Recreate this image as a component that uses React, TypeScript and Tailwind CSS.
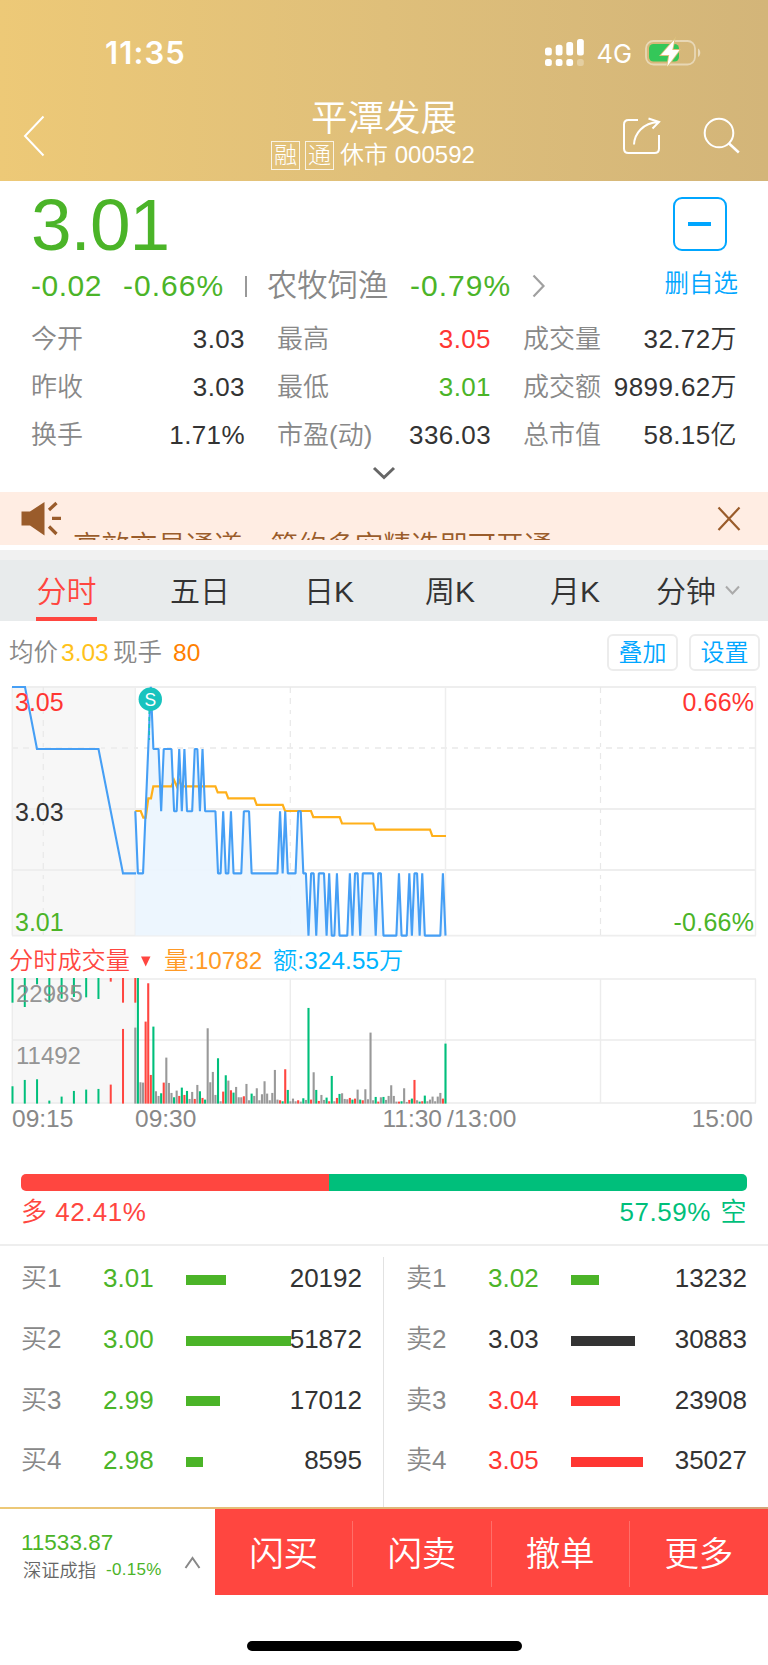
import { ReactNode } from 'react';

type Point = [number, number];

type Quote = {
  label: string;
  value: string;
  color?: string;
}

type OrderLevel = {
  label: string;
  price: string;
  volume: string;
  width: number;
  text: string;
  bar: string;
}

const quotes: Quote[] = [
  { label: "今开", value: "3.03" },
  { label: "最高", value: "3.05", color: "text-[#ff3632]" },
  { label: "成交量", value: "32.72万" },
  { label: "昨收", value: "3.03" },
  { label: "最低", value: "3.01", color: "text-[#4bb428]" },
  { label: "成交额", value: "9899.62万" },
  { label: "换手", value: "1.71%" },
  { label: "市盈(动)", value: "336.03" },
  { label: "总市值", value: "58.15亿" },
];

const buyLevels: OrderLevel[] = [
  { label: "买1", price: "3.01", volume: "20192", width: 40, text: "text-[#4bb428]", bar: "bg-[#4bb428]" },
  { label: "买2", price: "3.00", volume: "51872", width: 105, text: "text-[#4bb428]", bar: "bg-[#4bb428]" },
  { label: "买3", price: "2.99", volume: "17012", width: 34, text: "text-[#4bb428]", bar: "bg-[#4bb428]" },
  { label: "买4", price: "2.98", volume: "8595", width: 17, text: "text-[#4bb428]", bar: "bg-[#4bb428]" },
];

const sellLevels: OrderLevel[] = [
  { label: "卖1", price: "3.02", volume: "13232", width: 28, text: "text-[#4bb428]", bar: "bg-[#4bb428]" },
  { label: "卖2", price: "3.03", volume: "30883", width: 64, text: "text-[#333333]", bar: "bg-[#333333]" },
  { label: "卖3", price: "3.04", volume: "23908", width: 49, text: "text-[#ff3632]", bar: "bg-[#ff3632]" },
  { label: "卖4", price: "3.05", volume: "35027", width: 72, text: "text-[#ff3632]", bar: "bg-[#ff3632]" },
];

// minute after 09:30, level above the bottom of the grid
const priceSteps: Point[] = [
  [0, 2], [1, 1], [3, 1], [4, 2], [5, 3], [6, 4], [7, 3], [9, 3], [10, 2], [11, 3], [14, 3], [15, 2], [16, 2],
  [17, 3], [18, 2], [19, 3], [20, 2], [22, 2], [23, 3], [24, 3], [25, 2], [26, 3], [27, 2], [31, 2], [32, 1],
  [33, 1], [34, 2], [35, 1], [36, 1], [37, 2], [38, 1], [41, 1], [42, 2], [44, 2], [45, 1], [55, 1], [56, 2],
  [57, 1], [58, 2], [59, 1], [62, 1], [63, 2], [64, 2], [65, 1], [66, 1], [67, 0], [68, 1], [69, 1], [70, 0],
  [71, 1], [73, 1], [74, 0], [75, 1], [76, 0], [77, 0], [78, 1], [79, 0], [82, 0], [83, 1], [84, 0], [85, 1],
  [86, 1], [87, 0], [88, 1], [92, 1], [93, 0], [94, 1], [95, 1], [96, 0], [101, 0], [102, 1], [103, 0],
  [105, 0], [106, 1], [107, 0], [108, 1], [109, 1], [110, 0], [111, 1], [112, 0], [118, 0], [119, 1], [120, 0],
];

const averageLine: Point[] = [
  [135.3, 811], [140.7, 811], [143.3, 817.7], [145.7, 817.7], [148.3, 798.3], [151, 798.3], [153.3, 786.3],
  [171.5, 786.3], [174, 780], [176.7, 786.3], [179.3, 780.5], [181.8, 786.3], [215.4, 786.3], [217.7, 792.3], [226, 792.3], [228.3, 798.3],
  [254.3, 798.3], [256.7, 804.8], [282.7, 804.8], [285, 811], [311, 811], [313.3, 817.2], [339.7, 817.2],
  [342, 823.5], [373.3, 823.5], [375.7, 829.7], [430, 829.7], [432.3, 836], [446, 836],
];

// r = up, g = down, n = unchanged; number is the bar's size
const volumeBars =
  "n228 g378 n64 n63 r246 r361 r86 g231 n37 n23 g31 r63 n138 n62 n32 g19 n39 r23 g48 r26 g38 n14 n35 r14 n56 g37 r17 g12 " +
  "n226 n64 n95 n26 g136 n7 r36 g85 n69 r40 g33 n50 n19 n19 r22 n59 n10 g30 n23 n46 n10 n28 n67 n30 n10 n32 n101 n12 r10 " +
  "g7 r103 g41 n7 n15 n7 r10 n6 g16 n11 g287 r12 n94 g41 r8 n26 n11 g18 r7 g83 n7 r17 g29 n31 n14 n13 r17 g12 r15 n42 g12 " +
  "r10 n43 n13 n213 n10 g20 r6 n19 g20 n11 n23 n55 n23 n6 r6 g7 n46 n5 r11 g15 r71 n10 g6 r7 g24 n7 n12 n21 n7 n21 n32 r15 g180";

const auctionBars = [
  { drop: 74, rise: 52, up: false },
  { drop: 87, rise: 71, up: false },
  { drop: 19, rise: 73, up: false },
  { drop: 74, rise: 9, up: false },
  { drop: 62, rise: 21, up: false },
  { drop: 57, rise: 38, up: false },
  { drop: 58, rise: 42, up: false },
  { drop: 63, rise: 44, up: false },
  { drop: 11, rise: 57, up: true },
  { drop: 74, rise: 224, up: true },
  { drop: 74, rise: 0, up: true },
];

const barColors: Record<string, string> = { r: "#ff4640", g: "#00bf7b", n: "#999999" };

const START_X = 135.3;
const MINUTE = 2.585;

const toPoints = (points: Point[]) => points.map(([x, y]) => `${x},${y}`).join(" ");

const Header = () => (
  <header className="h-[181px] bg-linear-to-r from-[#edc977] via-[#dfbf7a] to-[#d3b579] text-white">
    <div className="flex h-[98px] items-center pt-[7px]">
      <span className="ml-[105px] w-[439px] font-['Inter'] text-[31px] leading-none font-semibold tracking-[1.1px]">11:35</span>
      <svg width="160" height="34" viewBox="544 35 160 34">
        <g fill="#fff">
          <rect x="545" y="46.5" width="6.8" height="8" rx="2.5" />
          <rect x="555.7" y="43.7" width="6.8" height="10.8" rx="2.5" />
          <rect x="566.3" y="41" width="6.8" height="13.5" rx="2.5" />
          <rect x="577" y="38" width="6.8" height="16.5" rx="2.5" />
          <rect x="545" y="58" width="6.8" height="7" rx="2.5" />
          <rect x="555.7" y="58" width="6.8" height="7" rx="2.5" />
          <rect x="566.3" y="58" width="6.8" height="7" rx="2.5" />
          <rect x="577" y="58" width="6.8" height="7" rx="2.5" opacity=".3" />
        </g>
        <text x="596.5" y="62" fill="#fff" fontSize="25.5" fontFamily="Inter" fontWeight="400" textLength="35.5">4G</text>
        <rect x="646" y="40" width="49" height="23.5" rx="7.5" fill="none" stroke="#fff" strokeOpacity=".45" strokeWidth="1.8" />
        <path d="M698 47.5c3 1.5 3 7 0 8.500z" fill="#fff" fillOpacity=".5" />
        <rect x="649" y="43" width="30" height="17.500" rx="4.5" fill="#34c759" />
        <path d="M674.500 38.500 661 54h8.200l-2 11.500L679.500 49h-7.200z" fill="#fff" stroke="#dcc07c" strokeWidth="1.800" paintOrder="stroke" />
      </svg>
    </div>
    <div className="flex h-[83px] justify-between">
      <svg width="168" height="83" viewBox="0 98 168 83" fill="none" stroke="#fff" strokeWidth="2">
        <path d="M43.500 116.500 25 136l18.500 19.500" />
      </svg>
      <div className="flex flex-col items-center pt-[2px]">
        <h1 className="h-[38px] text-[36.500px] leading-[38px] font-[350]">平潭发展</h1>
        <div className="mr-[22px] flex h-[34px] items-center text-[24px] leading-[34px]">
          <span className="mr-[5px] flex h-[29px] w-[29px] items-center justify-center border border-white/80 text-[23px] font-light">融</span>
          <span className="mr-[6px] flex h-[29px] w-[29px] items-center justify-center border border-white/80 text-[23px] font-light">通</span>
          <span>休市 000592</span>
        </div>
      </div>
      <svg width="168" height="83" viewBox="600 98 168 83" fill="none" stroke="#fff" strokeWidth="2">
        <path d="M638 120h-9.500q-4.500 0-4.500 4.500V148.500q0 4.500 4.500 4.500H654.500q4.500 0 4.500-4.500V135" />
        <path d="M634 144.500c.5-11 9-21.500 24-22.500M648.500 118.500 659 122l-6.500 6.500" />
        <circle cx="719" cy="133" r="14.300" />
        <path d="m728.500 143 10.300 9.500" strokeWidth="2.500" />
      </svg>
    </div>
  </header>
);

const Summary = () => (
  <section className="h-[311px] pt-[7px]">
    <div className="flex justify-between pr-[30px] pl-[31px]">
      <div className="text-[#4bb428]">
        <div className="h-[74px] text-[73px] leading-[74px] tracking-[-1px]">3.01</div>
        <div className="flex h-[48px] items-center text-[30px] leading-[48px]">
          <span className="w-[92px] tracking-[0.5px]">-0.02</span>
          <span className="w-[122px] tracking-[1px]">-0.66%</span>
          <span className="mr-[20px] h-[21px] w-[2px] bg-[#999999]" />
          <span className="w-[143px] text-[30.300px] text-[#888888]">农牧饲渔</span>
          <span className="w-[122px] tracking-[1px]">-0.79%</span>
          <svg width="14" height="24" viewBox="0 0 14 24" fill="none" stroke="#a0a0a0" strokeWidth="2.200">
            <path d="m1.500 1.500 10 10.500-10 10.500" />
          </svg>
        </div>
      </div>
      <div className="flex flex-col items-center pt-[9px] text-[#00a6ff]">
        <button className="mr-[3px] flex h-[54px] w-[54px] items-center justify-center rounded-[9px] border-2 border-[#00a6ff]">
          <span className="h-[4px] w-[23px] bg-[#00a6ff]" />
        </button>
        <span className="mt-[17px] text-[24.500px] leading-[32px]">删自选</span>
      </div>
    </div>
    <div className="mt-[5px] grid grid-cols-[214px_214px_214px] gap-x-[32px] pl-[31px] text-[26px] leading-[48px]">
      {quotes.map((quote) => (
        <div key={quote.label} className="flex justify-between whitespace-nowrap">
          <span className="text-[#888888]">{quote.label}</span>
          <span className={`tracking-[0.4px] ${quote.color ?? "text-[#333333]"}`}>{quote.value}</span>
        </div>
      ))}
    </div>
    <div className="flex justify-center pt-[7px]">
      <svg width="24" height="14" viewBox="0 0 24 14" fill="none" stroke="#666" strokeWidth="3">
        <path d="m2 2 10 9.500L22 2" />
      </svg>
    </div>
  </section>
);

const Notice = () => (
  <div className="flex h-[53px] justify-between bg-[#ffede3]">
    <svg className="shrink-0" width="73" height="53" viewBox="0 492 73 53">
      <path d="M21.500 511.500h8.500L44.500 502v33.500L30 525.500h-8.500z" fill="#9a5c2b" />
      <path d="m49 510 7.500-7M52 518.300h9M49 526.500l7.500 7.500" stroke="#9a5c2b" strokeWidth="3.200" fill="none" />
    </svg>
    <div className="mr-auto h-[48px] overflow-hidden pt-[38px] text-[28.200px] leading-[32px] whitespace-nowrap text-[#9a5c2b]">
      高效交易通道，简约多空精选即可开通
    </div>
    <svg className="shrink-0" width="60" height="53" viewBox="708 492 60 53" fill="none" stroke="#9a5c2b" strokeWidth="2.200">
      <path d="m718.500 507.500 21 22.500M739.500 507.500l-21 22.500" />
    </svg>
  </div>
);

const Tabs = () => (
  <nav className="flex h-[61px] bg-[#e8ebec] text-[30px] leading-[63px] text-[#333333]">
    <div className="ml-[36px] flex h-full w-[61px] justify-center border-b-4 border-[#ff4640] text-[#ff4640]">分时</div>
    <span className="ml-[73px] w-[134px]">五日</span>
    <span className="w-[121px]">日K</span>
    <span className="w-[125px]">周K</span>
    <span className="w-[106px]">月K</span>
    <span>分钟</span>
    <svg className="mt-[25px] ml-[9px]" width="15" height="11" viewBox="0 0 15 11" fill="none" stroke="#aaa" strokeWidth="2">
      <path d="m1 1.500 6.500 7 6.500-7" />
    </svg>
  </nav>
);

const ChartButton = ({ children }: { children: ReactNode }) => (
  <button className="h-[37px] w-[71px] rounded-[6px] border-2 border-[#ececec] text-[24px] leading-[34px] text-[#00a6ff]">
    {children}
  </button>
);

const PriceChart = () => {
  const line = priceSteps.map(([minute, level]): Point => [START_X + minute * MINUTE, 935.6 - level * 62.2]);

  return (
    <svg className="block" width="768" height="260" viewBox="0 683 768 260">
      <rect x="12" y="687" width="123.500" height="248.600" fill="#f7f7f7" />
      <g stroke="#eeeeee" strokeWidth="1.500" fill="none">
        <path d="M12.300 687V935.600M135.300 687V935.600M445.500 687V935.600M755.500 687V935.600" />
        <path d="M12 687H756M12 809H756M12 870H756M12 935.600H756" strokeWidth="1.800" />
        <path d="M12 748H756" strokeWidth="1.800" strokeDasharray="6 5 6 6 4 6" />
        <path d="M43.300 687V935.600M290.300 687V935.600M600.500 687V935.600" stroke="#e8e8e8" strokeWidth="1.200" strokeDasharray="6 5 6 6 4 6" />
      </g>
      <polygon points={`${START_X},935.600 ${toPoints(line)}`} fill="#ecf5fe" fillOpacity=".92" />
      <polyline points={toPoints(averageLine)} fill="none" stroke="#ffb01a" strokeWidth="2.200" />
      <g fill="none" stroke="#469ff5" strokeWidth="2.100">
        <polyline points="12,687 25,687 37,749 98.500,749 123,873.400 136,873.400" />
        <polyline points={toPoints(line)} strokeLinejoin="bevel" />
      </g>
      <path d="M149.300 710V740" stroke="#18c3be" strokeWidth="1.500" strokeDasharray="4 3" />
      <circle cx="150.300" cy="699.300" r="11.700" fill="#18c3be" />
      <text x="150.300" y="705.500" textAnchor="middle" fontSize="17.500" fill="#fff">S</text>
      <g fontSize="25">
        <text x="15" y="711" fill="#ff3632">3.05</text>
        <text x="15" y="820.700" fill="#333">3.03</text>
        <text x="15" y="930.700" fill="#4bb428">3.01</text>
        <text x="682.500" y="711" fill="#ff3632" textLength="71.500">0.66%</text>
        <text x="673.500" y="930.700" fill="#4bb428" textLength="80.500">-0.66%</text>
      </g>
    </svg>
  );
};

const VolumeChart = () => (
  <svg className="block" width="768" height="162" viewBox="0 978 768 162">
    <rect x="12" y="978" width="123.500" height="125" fill="#f7f7f7" />
    <path
      d="M12.300 979V1103M135.300 979V1103M290.300 979V1103M445.500 979V1103M600.500 979V1103M755.500 979V1103M12 979H756M12 1040H756M12 1103H756"
      stroke="#ececec" strokeWidth="1.400" fill="none"
    />
    {auctionBars.map((bar, i) => (
      <g key={i} fill={bar.up ? barColors.r : barColors.g}>
        <rect x={11.5 + i * 12.28} y="978" width="2" height={bar.drop / 3} />
        <rect x={11.5 + i * 12.28} y={1103.6 - bar.rise / 3} width="2" height={bar.rise / 3} />
      </g>
    ))}
    <g fontSize="24" fill="#888" fillOpacity=".9">
      <text x="16" y="1001.700">22985</text>
      <text x="16" y="1063.700">11492</text>
    </g>
    {volumeBars.split(" ").map((bar, i) => {
      const height = Number(bar.slice(1)) / 3;
      return <rect key={i} x={START_X - 1.05 + i * MINUTE} y={1103.6 - height} width="2.100" height={height} fill={barColors[bar[0]]} />;
    })}
    <g fontSize="24.500" fill="#888">
      <text x="12" y="1127">09:15</text>
      <text x="135" y="1127">09:30</text>
      <text x="442" y="1127" textAnchor="end">11:30</text>
      <text x="447" y="1127" textLength="69.500">/13:00</text>
      <text x="753" y="1127" textAnchor="end">15:00</text>
    </g>
  </svg>
);

const OrderBook = ({ levels }: { levels: OrderLevel[] }) => (
  <div className="w-[341px] pt-[2px] text-[26px] leading-[60.800px]">
    {levels.map((level) => (
      <div key={level.label} className="flex items-center">
        <span className="w-[82px] shrink-0 text-[#888888]">{level.label}</span>
        <span className={`w-[83px] shrink-0 ${level.text}`}>{level.price}</span>
        <span className={`mt-[3px] h-[10px] shrink-0 ${level.bar}`} style={{ width: level.width }} />
        <span className="-ml-[2px] grow text-right text-[#333333]">{level.volume}</span>
      </div>
    ))}
  </div>
);

const BottomBar = () => (
  <footer className="h-[158px]">
    <div className="h-[2px] bg-linear-to-r from-[#edc977] to-[#d3a579]" />
    <div className="flex h-[86px]">
      <div className="flex w-[215px] shrink-0 pl-[21px]">
        <div className="w-[163px] pt-[20px]">
          <div className="text-[22.500px] leading-[28px] text-[#4bb428]">11533.87</div>
          <div className="flex items-center pt-[2px] text-[18.300px] leading-[24px]">
            <span className="ml-[2px] w-[83px] text-[#666666]">深证成指</span>
            <span className="-mt-[2px] text-[17px] leading-[22px] tracking-[0.3px] text-[#4bb428]">-0.15%</span>
          </div>
        </div>
        <svg className="mt-[47px]" width="17" height="13" viewBox="0 0 17 13" fill="none" stroke="#888" strokeWidth="2">
          <path d="m1.500 12 7-10 7 10" />
        </svg>
      </div>
      <div className="grid grow grid-cols-4 bg-[#ff4640] pt-[12px] pb-[9px] text-center text-[34.500px] leading-[66px] text-white">
        <span className="border-r border-[#ff6f69]">闪买</span>
        <span className="border-r border-[#ff6f69]">闪卖</span>
        <span className="border-r border-[#ff6f69]">撤单</span>
        <span>更多</span>
      </div>
    </div>
    <div className="mx-auto mt-[46px] h-[10px] w-[275px] rounded-full bg-black" />
  </footer>
);

const App = () => {
  return (
    <div className="h-[1665px] w-[768px] overflow-hidden bg-white font-['Liberation_Sans','Noto_Sans_CJK_SC',sans-serif] font-[350]">
      <Header />
      <Summary />
      <Notice />
      <div className="mt-[5px] h-[10px] bg-[#f1f1f1]" />
      <Tabs />
      <div className="flex h-[62px] items-center pr-[8px] pl-[9px] text-[24.500px]">
        <span className="w-[52px] pt-[2px] text-[#888888]">均价</span>
        <span className="w-[52px] pt-[2px] text-[#ffc21a]">3.03</span>
        <span className="w-[60px] pt-[2px] text-[#888888]">现手</span>
        <span className="grow pt-[2px] text-[#ff8000]">80</span>
        <div className="flex gap-[11px]">
          <ChartButton>叠加</ChartButton>
          <ChartButton>设置</ChartButton>
        </div>
      </div>
      <PriceChart />
      <div className="flex h-[35px] items-center pl-[9px] text-[24.200px] leading-[35px]">
        <span className="w-[131px] text-[#ff4640]">分时成交量</span>
        <svg width="24" height="12" viewBox="0 0 24 12"><path d="M1 1.500h9.500L5.700 11.500z" fill="#ff4640" /></svg>
        <span className="w-[109px] text-[#ff9a26]">量:10782</span>
        <span className="tracking-[0.15px] text-[#00b4ff]">额:324.55万</span>
      </div>
      <VolumeChart />
      <div className="mx-[21px] mt-[34px] flex h-[17px] overflow-hidden rounded-[5px]">
        <div className="w-[308px] bg-[#ff4640]" />
        <div className="grow bg-[#00bf7b]" />
      </div>
      <div className="flex h-[42px] justify-between px-[21px] text-[26px] leading-[42px] tracking-[0.5px]">
        <span className="text-[#ff4640]">多 42.41%</span>
        <span className="text-[#00bf7b]">57.59% <span className="ml-[2px]">空</span></span>
      </div>
      <div className="mt-[11px] h-[2px] bg-[#eeeeee]" />
      <div className="flex h-[261px] pl-[21px]">
        <OrderBook levels={buyLevels} />
        <div className="mt-[11px] mr-[22px] ml-[21px] w-px bg-[#e2e2e2]" />
        <OrderBook levels={sellLevels} />
      </div>
      <BottomBar />
    </div>
  )
}

export default App
